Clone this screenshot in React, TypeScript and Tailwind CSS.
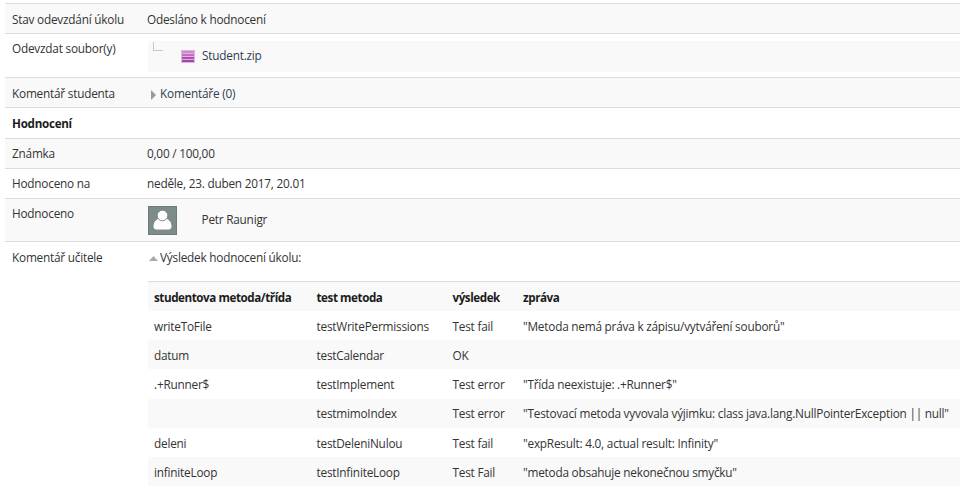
import type { ReactNode } from "react";

function Row({ label, children, className, labelTop = "pt-[6px]" }: { label: string; children?: ReactNode; className: string; labelTop?: string }) {
  return (
    <div className={`flex border-t border-[#dddddd] pl-[7px] ${className}`}>
      <div className={`w-[135px] shrink-0 leading-[18px] ${labelTop}`}>{label}</div>
      <div className="min-w-0 grow leading-[18px]">{children}</div>
    </div>
  );
}

const results = [
  ["writeToFile", "testWritePermissions", "Test fail", '"Metoda nemá práva k zápisu/vytváření souborů"'],
  ["datum", "testCalendar", "OK", ""],
  [".+Runner$", "testImplement", "Test error", '"Třída neexistuje: .+Runner$"'],
  ["", "testmimoIndex", "Test error", '"Testovací metoda vyvovala výjimku: class java.lang.NullPointerException || null"'],
  ["deleni", "testDeleniNulou", "Test fail", '"expResult: 4.0, actual result: Infinity"'],
  ["infiniteLoop", "testInfiniteLoop", "Test Fail", '"metoda obsahuje nekonečnou smyčku"'],
];

const columns = "grid grid-cols-[162.5px_136px_70.5px_1fr] h-[29.17px] items-center pl-1.5 whitespace-nowrap";

export default function App() {
  return (
    <div className="h-[494px] w-[960px] overflow-hidden bg-white pt-[3px] pl-[5px] font-['Open_Sans','Noto_Sans',sans-serif] text-[11.8px] tracking-[-0.22px] text-[#333333]">
      <Row label="Stav odevzdání úkolu" className="h-[30px] bg-[#f9f9f9]">
        <div className="pt-[6px]">Odesláno k hodnocení</div>
      </Row>
      <Row label="Odevzdat soubor(y)" labelTop="pt-[5px]" className="h-[44px]">
        <div className="mt-[7px] ml-px flex h-[31px] bg-[#f9f9f9]">
          <div className="mt-px ml-[5px] h-[9px] w-[10px] border-b border-l border-[#c8c8c8]" />
          <svg className="mt-[9px] ml-[18px] h-[13px] w-[14px]" viewBox="0 0 14 13">
            <path fill="#dfb3e0" d="M0 0h14v13H0z" />
            <path fill="#d287d1" d="M1 1h12v2H1z" />
            <path fill="#c36bc5" d="M1 4h12v2H1z" />
            <path fill="#ad50b2" d="M1 7h12v2H1z" />
            <path fill="#9c48a4" d="M1 10h12v2H1z" />
          </svg>
          <div className="mt-[5px] ml-[7px] text-[#2f3e4e]">Student.zip</div>
        </div>
      </Row>
      <Row label="Komentář studenta" className="h-[30px] bg-[#f9f9f9]">
        <div className="flex pt-[6px] text-[#2f3e4e]">
          <svg className="mt-[6px] ml-1 h-[10px] w-[5px]" viewBox="0 0 5 10"><path d="M0 0l5 5-5 5z" fill="#999999" /></svg>
          <span className="ml-1">Komentáře (0)</span>
        </div>
      </Row>
      <div className="h-[31px] border-t border-[#dddddd] pt-[7px] pl-[7px] text-[11.65px] leading-[18px] font-bold tracking-[-0.28px] text-[#1c1c1c]">Hodnocení</div>
      <Row label="Známka" labelTop="pt-[5px]" className="h-[30px] bg-[#f9f9f9]">
        <div className="pt-[5px]">0,00 / 100,00</div>
      </Row>
      <Row label="Hodnoceno na" labelTop="pt-[5px]" className="h-[30px]">
        <div className="pt-[5px]">neděle, 23. duben 2017, 20.01</div>
      </Row>
      <Row label="Hodnoceno" labelTop="pt-[5px]" className="h-[43px] bg-[#f9f9f9]">
        <div className="flex pt-[6px]">
          <svg className="mt-px ml-px h-[29px] w-[29px]" viewBox="0 0 29 29">
            <path d="M0 0h29v29H0z" fill="#6d7c7a" />
            <path d="M1 1h27v27H1z" fill="#7d8c8a" />
            <path d="M14.5 12c-5.500 0-9 3.500-9 8.500 0 2 1 3 3 3h12c2 0 3-1 3-3 0-5-3.500-8.500-9-8.500z" fill="#ffffff" />
            <circle cx="14.500" cy="9.500" r="5.300" fill="#ffffff" stroke="#7d8c8a" />
          </svg>
          <span className="mt-[5px] ml-[24.500px]">Petr Raunigr</span>
        </div>
      </Row>
      <Row label="Komentář učitele" className="h-[252px]">
        <div className="flex pt-[6px]">
          <svg className="mt-[8px] ml-[2px] h-[5px] w-[9px]" viewBox="0 0 9 5"><path d="M0 5l4.500-5L9 5z" fill="#aaaaaa" /></svg>
          <span className="ml-[2px]">Výsledek hodnocení úkolu:</span>
        </div>
        <div className="mt-[15px] ml-px border-t border-[#dddddd]">
          <div className={`${columns} bg-[#f9f9f9] pt-[2px] text-[11.65px] font-bold tracking-[-0.44px] text-[#1c1c1c]`}>
            <span>studentova metoda/třída</span><span>test metoda</span><span>výsledek</span><span>zpráva</span>
          </div>
          {results.map((cells, i) => (
            <div key={i} className={`${columns} pt-[0.5px] ${i % 2 ? "bg-[#f9f9f9]" : "bg-white"}`}>
              {cells.map((cell, j) => <span key={j}>{cell}</span>)}
            </div>
          ))}
        </div>
      </Row>
    </div>
  );
}
